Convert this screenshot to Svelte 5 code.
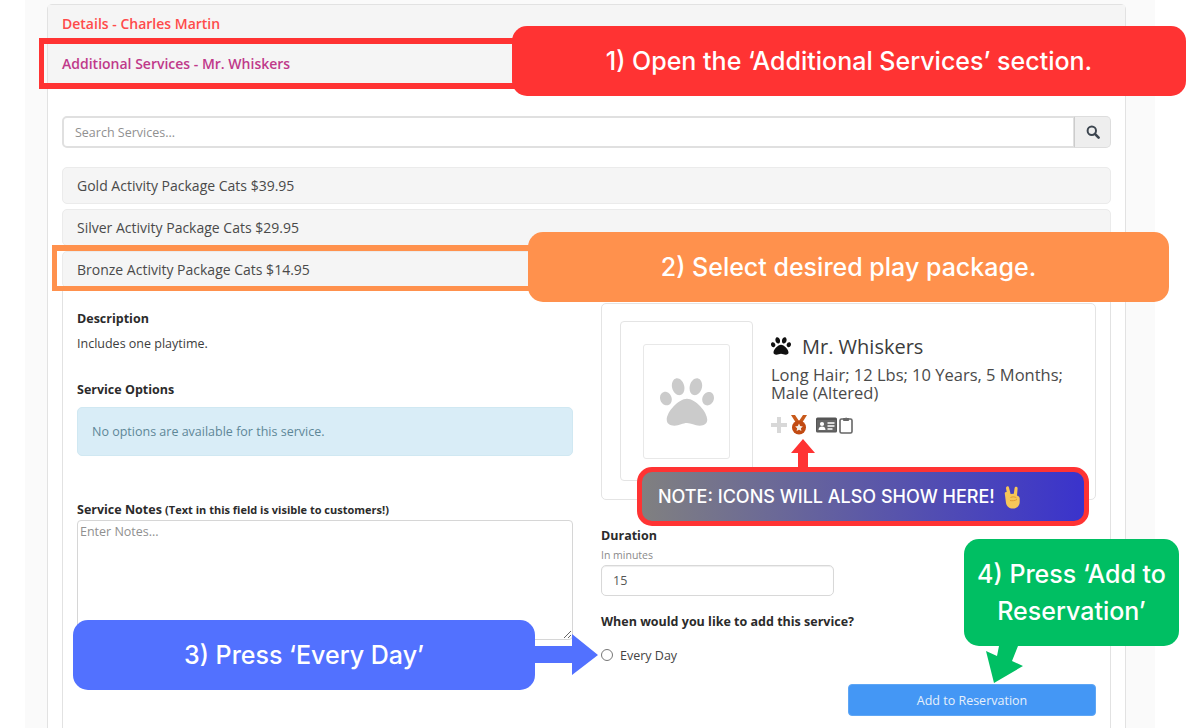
<script>
  const pawPath = "M256 224c-79.41 0-192 122.76-192 200.25 0 34.9 26.81 55.75 71.74 55.75 48.84 0 81.09-25.08 120.26-25.08 39.51 0 71.85 25.08 120.26 25.08 44.93 0 71.74-20.85 71.74-55.75C448 346.76 335.41 224 256 224zm-147.28-12.61c-10.4-34.65-42.44-57.09-71.56-50.13-29.12 6.96-44.29 40.69-33.89 75.34 10.4 34.65 42.44 57.09 71.56 50.13 29.12-6.96 44.29-40.69 33.89-75.34zm84.72-20.78c30.94-8.14 46.42-49.94 34.58-93.36s-46.52-72.01-77.46-63.87-46.42 49.94-34.58 93.36c11.84 43.42 46.52 72.01 77.46 63.87zm281.39-29.34c-29.12-6.96-61.15 15.48-71.56 50.13-10.4 34.65 4.77 68.38 33.89 75.34 29.12 6.96 61.15-15.48 71.56-50.13 10.4-34.65-4.77-68.38-33.89-75.34zm-156.27 29.34c30.94 8.14 65.62-20.45 77.46-63.87 11.84-43.42-3.64-85.21-34.58-93.36s-65.62 20.45-77.46 63.87c-11.84 43.42 3.64 85.22 34.58 93.36z";
</script>

<div class="page">
  <div class="band">
    <div class="card">
      <div class="head head-details">Details - Charles Martin</div>
      <div class="head head-services">Additional Services - Mr. Whiskers</div>
      <div class="card-body">
        <div class="search">
          <input class="search-input" placeholder="Search Services..." />
          <div class="search-btn">
            <svg width="14" height="14" viewBox="0 0 14 14"><circle cx="5.8" cy="5.8" r="4.2" fill="none" stroke="#3d4650" stroke-width="2"/><path d="M8.9 8.9 12.6 12.6" stroke="#3d4650" stroke-width="2.6" stroke-linecap="round"/></svg>
          </div>
        </div>
        <div class="row">Gold Activity Package Cats $39.95</div>
        <div class="row">Silver Activity Package Cats $29.95</div>
        <div class="row">Bronze Activity Package Cats $14.95</div>
        <div class="pkg">
          <div class="left">
            <div class="label">Description</div>
            <div class="desc">Includes one playtime.</div>
            <div class="label options">Service Options</div>
            <div class="alert">No options are available for this service.</div>
            <div class="label notes">Service Notes <small>(Text in this field is visible to customers!)</small></div>
            <textarea class="notes-area" placeholder="Enter Notes..."></textarea>
          </div>
          <div class="right">
            <div class="pet">
              <div class="photo">
                <div class="photo-inner">
                  <svg width="54" height="54" viewBox="0 0 512 512" fill="#cbcbcb"><path d={pawPath}/></svg>
                </div>
              </div>
              <div class="info">
                <div class="name">
                  <svg width="20" height="20" viewBox="0 0 512 512" fill="#111"><path d={pawPath}/></svg>
                  <span>Mr. Whiskers</span>
                </div>
                <div class="traits">Long Hair; 12 Lbs; 10 Years, 5 Months; Male (Altered)</div>
                <div class="icons">
                  <svg width="16" height="16" viewBox="0 0 16 16"><path d="M6 0h4v6h6v4h-6v6H6v-6H0V6h6z" fill="#d8d8d8"/></svg>
                  <svg class="medal" width="18" height="20" viewBox="0 0 18 20"><path d="M1 0h4l4 6 4-6h4l-5 8H6z" fill="#c8591a"/><circle cx="9" cy="12.5" r="7" fill="#c24a12"/><path d="M9 8.6l1.2 2.5 2.7.3-2 1.9.5 2.7L9 14.7 6.600 16l.5-2.700-2-1.900 2.700-.3z" fill="#f4ece4"/></svg>
                  <svg class="idcard" width="21" height="16" viewBox="0 0 21 16"><rect x="0" y="0.500" width="21" height="15" rx="1.500" fill="#555"/><rect x="1" y="3" width="19" height="11.500" fill="#666"/><circle cx="6" cy="7" r="2.100" fill="#fff"/><path d="M2.500 13c0-2.500 1.500-3.500 3.500-3.500s3.500 1 3.500 3.500z" fill="#fff"/><path d="M11.500 6h7M11.500 9h7M11.500 12h5" stroke="#fff" stroke-width="1.300"/></svg>
                  <svg class="clip" width="14" height="18" viewBox="0 0 14 18"><rect x="1" y="3" width="12" height="14" rx="1.500" fill="none" stroke="#666" stroke-width="1.600"/><path d="M4.500 4.500V2.500h1.700a1 1 0 0 1 1.800 0h1.600v2z" fill="#666" stroke="#666"/></svg>
                </div>
              </div>
            </div>
            <div class="label duration">Duration</div>
            <div class="hint">In minutes</div>
            <input class="duration-input" value="15" />
            <div class="label when">When would you like to add this service?</div>
            <label class="radio"><input type="radio" /><span>Every Day</span></label>
            <div class="actions"><button class="add">Add to Reservation</button></div>
          </div>
        </div>
      </div>
    </div>
  </div>

  <div class="frame frame-red"></div>
  <div class="frame frame-orange"></div>
  <div class="call call-red">1) Open the ‘Additional Services’ section.</div>
  <div class="call call-orange">2) Select desired play package.</div>
  <div class="call call-blue">3) Press ‘Every Day’</div>
  <div class="call call-green">4) Press ‘Add to Reservation’</div>
  <div class="note">
    <span>NOTE: ICONS WILL ALSO SHOW HERE!</span>
    <svg width="18" height="24" viewBox="0 0 18 24"><path d="M3 1.500c.9-.5 1.700 0 2 1l1.600 6.500 3.200-.3.800-5.700c.2-1 1-1.500 1.800-1.300.9.200 1.300 1 1.200 2l-.6 6.800 1.500.8c.8.500 1.200 1.300 1.200 2.300v3.400c0 3.800-2.800 6.500-6.700 6.500-3.800 0-6.400-2.300-7-5.600L.800 8.800C.600 7.800 1.100 7.100 1.900 7l.8.100L2 3.300c-.1-.8.300-1.500 1-1.800z" fill="#f6c659"/><path d="M6.500 12.500c2-1 4.500-.8 6 .4M6 15.500c2.500.5 5 .2 7-1" stroke="#e09b33" stroke-width="1" fill="none"/></svg>
  </div>
  <svg class="arrow arrow-red" width="26" height="28" viewBox="0 0 26 28"><path d="M13 0 25 14H18V28H8V14H1z" fill="#ff3333"/></svg>
  <svg class="arrow arrow-blue" width="64" height="42" viewBox="0 0 64 42"><path d="M0 12H37V0L63 21 37 41V29H0z" fill="#5271ff"/></svg>
  <svg class="arrow arrow-green" width="42" height="40" viewBox="0 0 42 40"><path d="M14 0H33L27 15 38 20 9 37 1 5 12 10z" fill="#00bf63"/></svg>
</div>

<style>
  :global(body) { margin: 0; background: #fff; }
  .page {
    position: relative;
    width: 1196px;
    height: 728px;
    overflow: hidden;
    background: #fff;
    font-family: "Open Sans", "Liberation Sans", sans-serif;
    color: #333;
  }
  .band {
    box-sizing: border-box;
    margin-left: 25px;
    width: 1130px;
    height: 728px;
    padding: 4px 29px 0 22px;
    background: #fafafa;
  }
  .card {
    height: 760px;
    background: #fff;
    border: 1px solid #e2e2e2;
    border-radius: 5px 5px 0 0;
  }
  .head {
    box-sizing: border-box;
    height: 38px;
    padding: 0 14px;
    display: flex;
    align-items: center;
    background: #f5f5f5;
    font-size: 14px;
    font-weight: 600;
  }
  .head-details { color: #ff4a4a; height: 37px; }
  .head-services { color: #c0398a; height: 43px; border-top: 1px solid #e6e6e6; border-bottom: 1px solid #e6e6e6; }
  .card-body { padding: 31px 14px 0; }
  .search {
    display: flex;
    height: 32px;
    margin-bottom: 19px;
  }
  .search-input {
    flex: 1;
    box-sizing: border-box;
    height: 32px;
    padding: 0 11px;
    border: 2px solid #e0e0e0;
    border-right-width: 1px;
    border-radius: 5px 0 0 5px;
    font: 12.500px "Open Sans", sans-serif;
    outline: none;
    background: #fff;
  }
  .search-input::placeholder, .notes-area::placeholder { color: #909090; opacity: 1; }
  .search-btn {
    box-sizing: border-box;
    width: 37px;
    display: flex;
    align-items: center;
    justify-content: center;
    background: #eeeeee;
    border: 1px solid #ddd;
    border-left-color: #ccc;
    border-radius: 0 5px 5px 0;
  }
  .row {
    box-sizing: border-box;
    height: 37px;
    margin-bottom: 5px;
    padding: 0 14px;
    display: flex;
    align-items: center;
    background: #f5f5f5;
    border: 1px solid #ebebeb;
    border-radius: 5px;
    font-size: 14px;
    color: #4a4a4a;
  }
  .row:nth-of-type(4) { margin-bottom: 0; }
  .pkg {
    display: grid;
    grid-template-columns: 496px 495px;
    column-gap: 28px;
    padding: 15px 14px 0;
    border-left: 1px solid #e2e2e2;
    border-right: 1px solid #e2e2e2;
    height: 460px;
  }
  .left { padding-top: 6px; }
  .label {
    font-size: 12.500px;
    line-height: 20px;
    font-weight: 700;
    color: #2b2b2b;
  }
  .label small { font-size: 11px; }
  .desc { margin-top: 5px; font-size: 12.500px; line-height: 20px; color: #3d3d3d; }
  .options { margin-top: 26px; }
  .alert {
    box-sizing: border-box;
    margin-top: 7px;
    height: 49px;
    padding: 0 14px;
    display: flex;
    align-items: center;
    background: #d9edf7;
    border: 1px solid #d0e8f2;
    border-radius: 5px;
    font-size: 12.500px;
    color: #5e8797;
  }
  .notes { margin-top: 44px; }
  .notes-area {
    display: block;
    box-sizing: border-box;
    width: 100%;
    height: 120px;
    padding: 2px;
    border: 1px solid #d6d6d6;
    border-radius: 4px;
    font: 12.500px "Open Sans", sans-serif;
    outline: none;
  }
  .pet {
    box-sizing: border-box;
    height: 197px;
    display: flex;
    gap: 18px;
    padding: 17px 18px 0;
    border: 1px solid #e4e4e4;
    border-radius: 5px;
  }
  .photo {
    flex: none;
    box-sizing: border-box;
    width: 133px;
    height: 160px;
    padding: 22px;
    border: 1px solid #e4e4e4;
    border-radius: 4px;
  }
  .photo-inner {
    box-sizing: border-box;
    width: 87px;
    height: 115px;
    display: flex;
    align-items: center;
    justify-content: center;
    border: 1px solid #e8e8e8;
    border-radius: 3px;
  }
  .info { padding-top: 13px; }
  .name {
    height: 24px;
    display: flex;
    align-items: center;
    gap: 11px;
    font-size: 20px;
    color: #3c3c3c;
  }
  .traits {
    margin-top: 8px;
    font-size: 16.500px;
    line-height: 18px;
    color: #4a4a4a;
  }
  .icons {
    margin-top: 13px;
    height: 20px;
    display: flex;
    align-items: center;
  }
  .medal { margin-left: 3px; }
  .idcard { margin-left: 8px; }
  .clip { margin-left: 2px; }
  .duration { margin-top: 26px; }
  .hint { margin-top: 2px; font-size: 10.500px; line-height: 14px; color: #8a8a8a; }
  .duration-input {
    display: block;
    box-sizing: border-box;
    margin-top: 3px;
    width: 233px;
    height: 31px;
    padding: 0 11px;
    border: 1px solid #d8d8d8;
    border-radius: 5px;
    box-shadow: inset 0 1px 1px #eee;
    font: 12.500px "Open Sans", sans-serif;
    color: #555;
    outline: none;
  }
  .when { margin-top: 16px; }
  .radio {
    margin-top: 13px;
    height: 20px;
    display: flex;
    align-items: center;
    gap: 7px;
    font-size: 12.500px;
    color: #444;
  }
  .radio input { margin: 0; width: 12px; height: 12px; }
  .actions { display: flex; justify-content: flex-end; margin-top: 19px; }
  .add {
    width: 248px;
    height: 32px;
    border: 1px solid #5ea6f5;
    border-radius: 4px;
    background: #4497f5;
    color: #e6f0fb;
    font: 12.500px "Open Sans", sans-serif;
  }

  .frame { position: absolute; box-sizing: border-box; border-style: solid; border-right: 0; }
  .frame-red { left: 39px; top: 38px; width: 480px; height: 51px; border-width: 6px 0 6px 5px; border-color: #ff3333; }
  .frame-orange { left: 52px; top: 245px; width: 480px; height: 46px; border-width: 6px 0 5px 5px; border-color: #ff914d; }
  .call {
    position: absolute;
    box-sizing: border-box;
    display: flex;
    align-items: center;
    justify-content: center;
    text-align: center;
    color: #fff;
    font-family: Inter, "Open Sans", sans-serif;
    font-weight: 500;
    font-size: 25px;
    border-radius: 15px;
  }
  .call-red { left: 512px; top: 26px; width: 674px; height: 70px; background: #ff3333; }
  .call-orange { left: 528px; top: 232px; width: 641px; height: 70px; background: #ff914d; }
  .call-blue { left: 73px; top: 620px; width: 462px; height: 70px; background: #5271ff; }
  .call-green { left: 964px; top: 539px; width: 215px; height: 107px; background: #00bf63; line-height: 37px; padding: 0 8px; }
  .note {
    position: absolute;
    left: 637px;
    top: 467px;
    box-sizing: border-box;
    width: 452px;
    height: 59px;
    display: flex;
    align-items: center;
    gap: 9px;
    padding-left: 16px;
    border: 5px solid #ff3333;
    border-radius: 15px;
    background: linear-gradient(90deg, #808080, #3a33cc);
    color: #fff;
    font-family: Inter, "Open Sans", sans-serif;
    font-weight: 500;
    font-size: 18px;
  }
  .arrow { position: absolute; display: block; }
  .arrow-red { left: 790px; top: 439px; }
  .arrow-blue { left: 535px; top: 634px; }
  .arrow-green { left: 985px; top: 646px; }
</style>
